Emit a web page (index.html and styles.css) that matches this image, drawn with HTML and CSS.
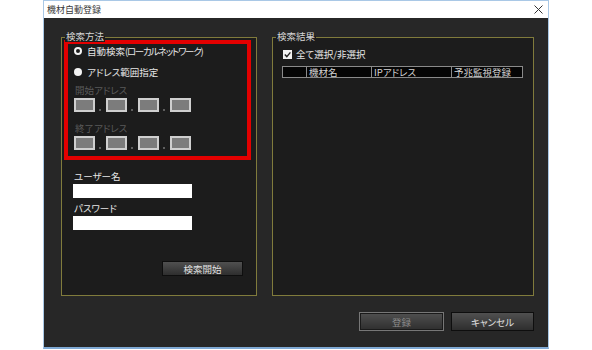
FILE: index.html
```html
<!DOCTYPE html>
<html lang="ja">
<head>
<meta charset="utf-8">
<title>機材自動登録</title>
<link rel="stylesheet" href="styles.css">
</head>
<body>
<div class="window">
  <div class="titlebar">
    <span class="title">機材自動登録</span>
    <svg class="close" width="9" height="9" viewBox="0 0 9 9"><path d="M0.5 0.5 L8.5 8.5 M8.5 0.5 L0.5 8.5" stroke="#333" stroke-width="1"/></svg>
  </div>
  <div class="content">
    <div class="groups">
      <div class="group left">
        <span class="legend">検索方法</span>
        <div class="redbox">
          <div class="radio-row"><span class="radio on"></span><span class="label">自動検索<span class="kana">(ローカルネットワーク)</span></span></div>
          <div class="radio-row second"><span class="radio off"></span><span class="label">アドレス範囲指定</span></div>
          <div class="dim first">開始アドレス</div>
          <div class="ip">
            <span class="box"></span><span class="dot"></span><span class="box"></span><span class="dot"></span><span class="box"></span><span class="dot"></span><span class="box"></span>
          </div>
          <div class="dim second">終了アドレス</div>
          <div class="ip">
            <span class="box"></span><span class="dot"></span><span class="box"></span><span class="dot"></span><span class="box"></span><span class="dot"></span><span class="box"></span>
          </div>
        </div>
        <div class="field user">
          <div class="flabel">ユーザー名</div>
          <div class="input"></div>
        </div>
        <div class="field pass">
          <div class="flabel">パスワード</div>
          <div class="input"></div>
        </div>
        <div class="btn search">検索開始</div>
      </div>
      <div class="group right">
        <span class="legend">検索結果</span>
        <div class="check-row">
          <svg class="check" width="9" height="9" viewBox="0 0 9 9"><rect x="0" y="0" width="9" height="9" fill="#f2f2f2"/><path d="M1.8 4.6 L3.8 6.6 L7.4 2.4" stroke="#222" stroke-width="1.4" fill="none"/></svg>
          <span class="label">全て選択/非選択</span>
        </div>
        <div class="thead">
          <span class="th"></span>
          <span class="th">機材名</span>
          <span class="th">IPアドレス</span>
          <span class="th">予兆監視登録</span>
        </div>
      </div>
    </div>
    <div class="footer">
      <div class="btn disabled">登録</div>
      <div class="btn cancel">キャンセル</div>
    </div>
  </div>
</div>
</body>
</html>
```
FILE: styles.css
```css
* { box-sizing: border-box; }
html, body { margin: 0; padding: 0; background: #ffffff; }
body {
  font-family: "Noto Sans CJK JP", "Noto Sans", sans-serif;
  font-feature-settings: "palt" 1;
  font-kerning: normal;
  font-size: 9.5px;
  line-height: 12px;
}
.window {
  margin-left: 43px;
  width: 506px;
  height: 349px;
  border: 1px solid #a9c8e6;
  border-bottom: 2px solid #7fa9d4;
  display: flex;
  flex-direction: column;
}
.titlebar {
  height: 17px;
  background: #ffffff;
  display: flex;
  align-items: center;
  justify-content: space-between;
  padding: 0 5px 0 3px;
}
.title { color: #3a3a3a; font-size: 9px; }
.close { display: block; }
.content {
  flex: 1;
  background: #272727;
  padding: 19px 14px 0 17px;
  display: flex;
  flex-direction: column;
}
.groups {
  display: flex;
  gap: 15px;
  height: 259px;
}
.group {
  position: relative;
  border: 1px solid #807b3c;
  background: #1c1c1c;
  display: flex;
  flex-direction: column;
}
.group.left { width: 196px; }
.group.right { flex: 1; }
.legend {
  position: absolute;
  top: -8px;
  left: 3px;
  padding: 0 1px;
  color: #d6d6d6;
  background: linear-gradient(#272727 50%, #1c1c1c 50%);
}
.redbox {
  margin: 2px 5px 0 2px;
  height: 120px;
  border: 4px solid #e30000;
  padding: 1px 0 0 6px;
  display: flex;
  flex-direction: column;
}
.radio-row {
  display: flex;
  align-items: center;
  gap: 5px;
  height: 12px;
  color: #e6e6e6;
}
.radio-row.second { margin-top: 9px; }
.label { white-space: nowrap; }
.kana { letter-spacing: -1.3px; }
.radio {
  width: 8px;
  height: 8px;
  border-radius: 50%;
  flex: none;
}
.radio.on { border: 2px solid #f4f4f4; background: #1c1c1c; }
.radio.off { background: #f4f4f4; }
.dim { color: #5a5a5a; padding-left: 1px; }
.dim.first { margin-top: 6px; }
.dim.second { margin-top: 10px; }
.ip {
  display: flex;
  align-items: flex-end;
  margin-top: 2px;
  height: 14px;
}
.box {
  width: 21px;
  height: 14px;
  border: 2px solid #cfcfcf;
  background: #7c7c7c;
}
.dot {
  width: 11px;
  height: 14px;
  position: relative;
}
.dot::after {
  content: "";
  position: absolute;
  left: 4px;
  bottom: 1px;
  width: 2px;
  height: 2px;
  background: #5e5e5e;
}
.field { margin-left: 11px; }
.field.user { margin-top: 10px; }
.field.pass { margin-top: 4px; }
.flabel { color: #e6e6e6; padding-left: 1px; }
.input {
  margin-top: 2px;
  width: 119px;
  height: 14px;
  background: #ffffff;
}
.btn {
  display: flex;
  align-items: center;
  justify-content: center;
  border: 1px solid #0e0e0e;
  background: linear-gradient(#505050, #2e2e2e);
  color: #e0e0e0;
}
.btn.search {
  align-self: flex-end;
  margin: 31px 13px 0 0;
  width: 81px;
  height: 15px;
}
.check-row {
  display: flex;
  align-items: center;
  gap: 4px;
  height: 12px;
  margin: 10px 0 0 10px;
  color: #e6e6e6;
}
.check { display: block; }
.thead {
  display: grid;
  grid-template-columns: 23px 65px 80px 1fr;
  width: 241px;
  height: 12px;
  margin: 6px 0 0 9px;
  border: 1px solid #8a8a8a;
  background: #050505;
}
.th {
  border-left: 1px solid #8a8a8a;
  color: #d4d4d4;
  padding-left: 2px;
  line-height: 10px;
  white-space: nowrap;
}
.th:first-child { border-left: none; }
.footer {
  display: flex;
  justify-content: flex-end;
  gap: 7px;
  margin-top: 16px;
}
.footer .btn { height: 19px; }
.btn.disabled {
  width: 85px;
  border: 1px solid #777777;
  box-shadow: inset 0 0 0 1px #1a1a1a;
  color: #8a8a8a;
}
.btn.cancel { width: 83px; }
```
